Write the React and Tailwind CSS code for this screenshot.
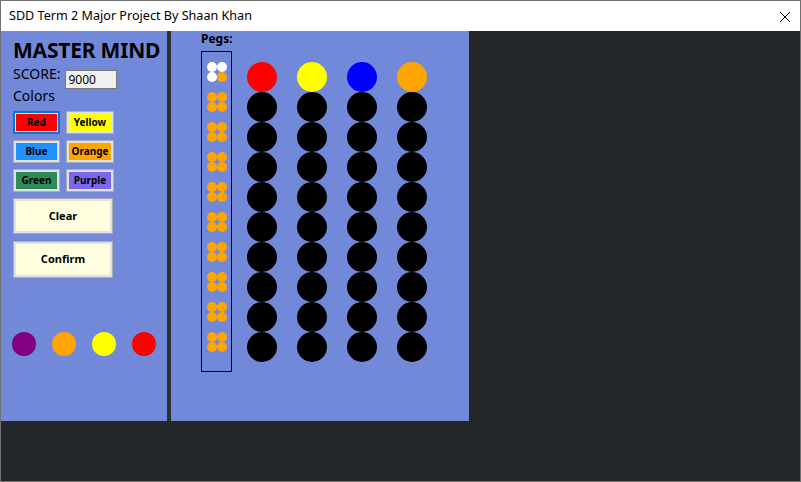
import React from "react";

const F = { fontFamily: '"Noto Sans", "Open Sans", sans-serif' };

function ColorBtn({ label, fill, focused }) {
  return (
    <div
      className={
        focused
          ? "h-[23px] border-2 border-[#0078d7] bg-[#e1e1e1] p-[1px] flex"
          : "h-[23px] border border-[#adadad] bg-[#e1e1e1] p-[2px] flex"
      }
    >
      <div className={`flex-1 flex items-center justify-center text-[10px] font-bold text-black ${fill}`}>
        {label}
      </div>
    </div>
  );
}

function BigBtn({ label, h }) {
  return (
    <div className={`w-[100px] ${h} border border-[#adadad] bg-[#e1e1e1] p-[2px] flex`}>
      <div className="flex-1 bg-[#ffffe0] flex items-center justify-center text-[11px] font-bold text-black">
        {label}
      </div>
    </div>
  );
}

const rows = [
  ["bg-[#ff0000]", "bg-[#ffff00]", "bg-[#0000ff]", "bg-[#ffa500]"],
];
for (let i = 0; i < 9; i++) rows.push(["bg-black", "bg-black", "bg-black", "bg-black"]);

const pegs = [["bg-white", "bg-white", "bg-white", "bg-[#ffa500]"]];
for (let i = 0; i < 9; i++) pegs.push(["bg-[#ffa500]", "bg-[#ffa500]", "bg-[#ffa500]", "bg-[#ffa500]"]);

export default function App() {
  return (
    <div
      className="w-[801px] h-[482px] border border-[#707070] bg-[#23272a] flex flex-col overflow-hidden"
      style={F}
    >
      <div className="h-[30px] shrink-0 bg-white flex items-center justify-between pl-[8px] pr-[10px]">
        <span className="text-[12.6px] text-black leading-[16px]">SDD Term 2 Major Project By Shaan Khan</span>
        <svg width="10" height="10" viewBox="0 0 10 10" className="mt-[1px]">
          <path d="M0 0 L10 10 M10 0 L0 10" stroke="#000" strokeWidth="1" />
        </svg>
      </div>
      <div className="flex h-[390px] shrink-0">
        <div className="w-[166px] bg-[#7289da] pl-[12px] pt-[7px] flex flex-col">
          <div className="text-[21px] font-bold leading-[24px] text-black tracking-[-0.2px]">MASTER MIND</div>
          <div className="flex mt-[2px] h-[25px]">
            <span className="text-[14px] leading-[20px] text-black">SCORE:</span>
            <div className="ml-[5px] mt-[6px] w-[52px] h-[19px] border border-[#7a7a7a] bg-[#f0f0f0] text-[12px] leading-[17px] pl-[2px] text-black">
              9000
            </div>
          </div>
          <div className="text-[14px] leading-[16px] text-black -mt-[1px]">Colors</div>
          <div className="mt-[7px] grid grid-cols-[47px_48px] gap-x-[6px] gap-y-[6px] w-[101px]">
            <ColorBtn label="Red" fill="bg-[#ff0000]" focused />
            <ColorBtn label="Yellow" fill="bg-[#ffff00]" />
            <ColorBtn label="Blue" fill="bg-[#1e90ff]" />
            <ColorBtn label="Orange" fill="bg-[#ffa500]" />
            <ColorBtn label="Green" fill="bg-[#2e8b57]" />
            <ColorBtn label="Purple" fill="bg-[#7b68ee]" />
          </div>
          <div className="mt-[6px]">
            <BigBtn label="Clear" h="h-[36px]" />
          </div>
          <div className="mt-[7px]">
            <BigBtn label="Confirm" h="h-[37px]" />
          </div>
          <div className="mt-[54px] -ml-[1px] flex gap-[16px]">
            <div className="w-[24px] h-[24px] rounded-full bg-[#800080]" />
            <div className="w-[24px] h-[24px] rounded-full bg-[#ffa500]" />
            <div className="w-[24px] h-[24px] rounded-full bg-[#ffff00]" />
            <div className="w-[24px] h-[24px] rounded-full bg-[#ff0000]" />
          </div>
        </div>
        <div className="w-[4px] bg-[#2c2f33]" />
        <div className="w-[298px] bg-[#7289da] pl-[30px] flex flex-col">
          <div className="text-[12px] font-bold leading-[16px] text-black">Pegs:</div>
          <div className="flex mt-[4px]">
            <div className="w-[31px] h-[321px] border border-black pt-[10px] pl-[5px] flex flex-col gap-[10px]">
              {pegs.map((g, i) => (
                <div key={i} className="grid grid-cols-[10px_10px] grid-rows-[10px_10px] w-[20px] h-[20px]">
                  {g.map((c, j) => (
                    <div key={j} className={`w-[10px] h-[10px] rounded-full ${c}`} />
                  ))}
                </div>
              ))}
            </div>
            <div className="ml-[15px] mt-[11px] flex flex-col">
              {rows.map((r, i) => (
                <div key={i} className="flex gap-[20px]">
                  {r.map((c, j) => (
                    <div key={j} className={`w-[30px] h-[30px] rounded-full ${c}`} />
                  ))}
                </div>
              ))}
            </div>
          </div>
        </div>
      </div>
    </div>
  );
}
